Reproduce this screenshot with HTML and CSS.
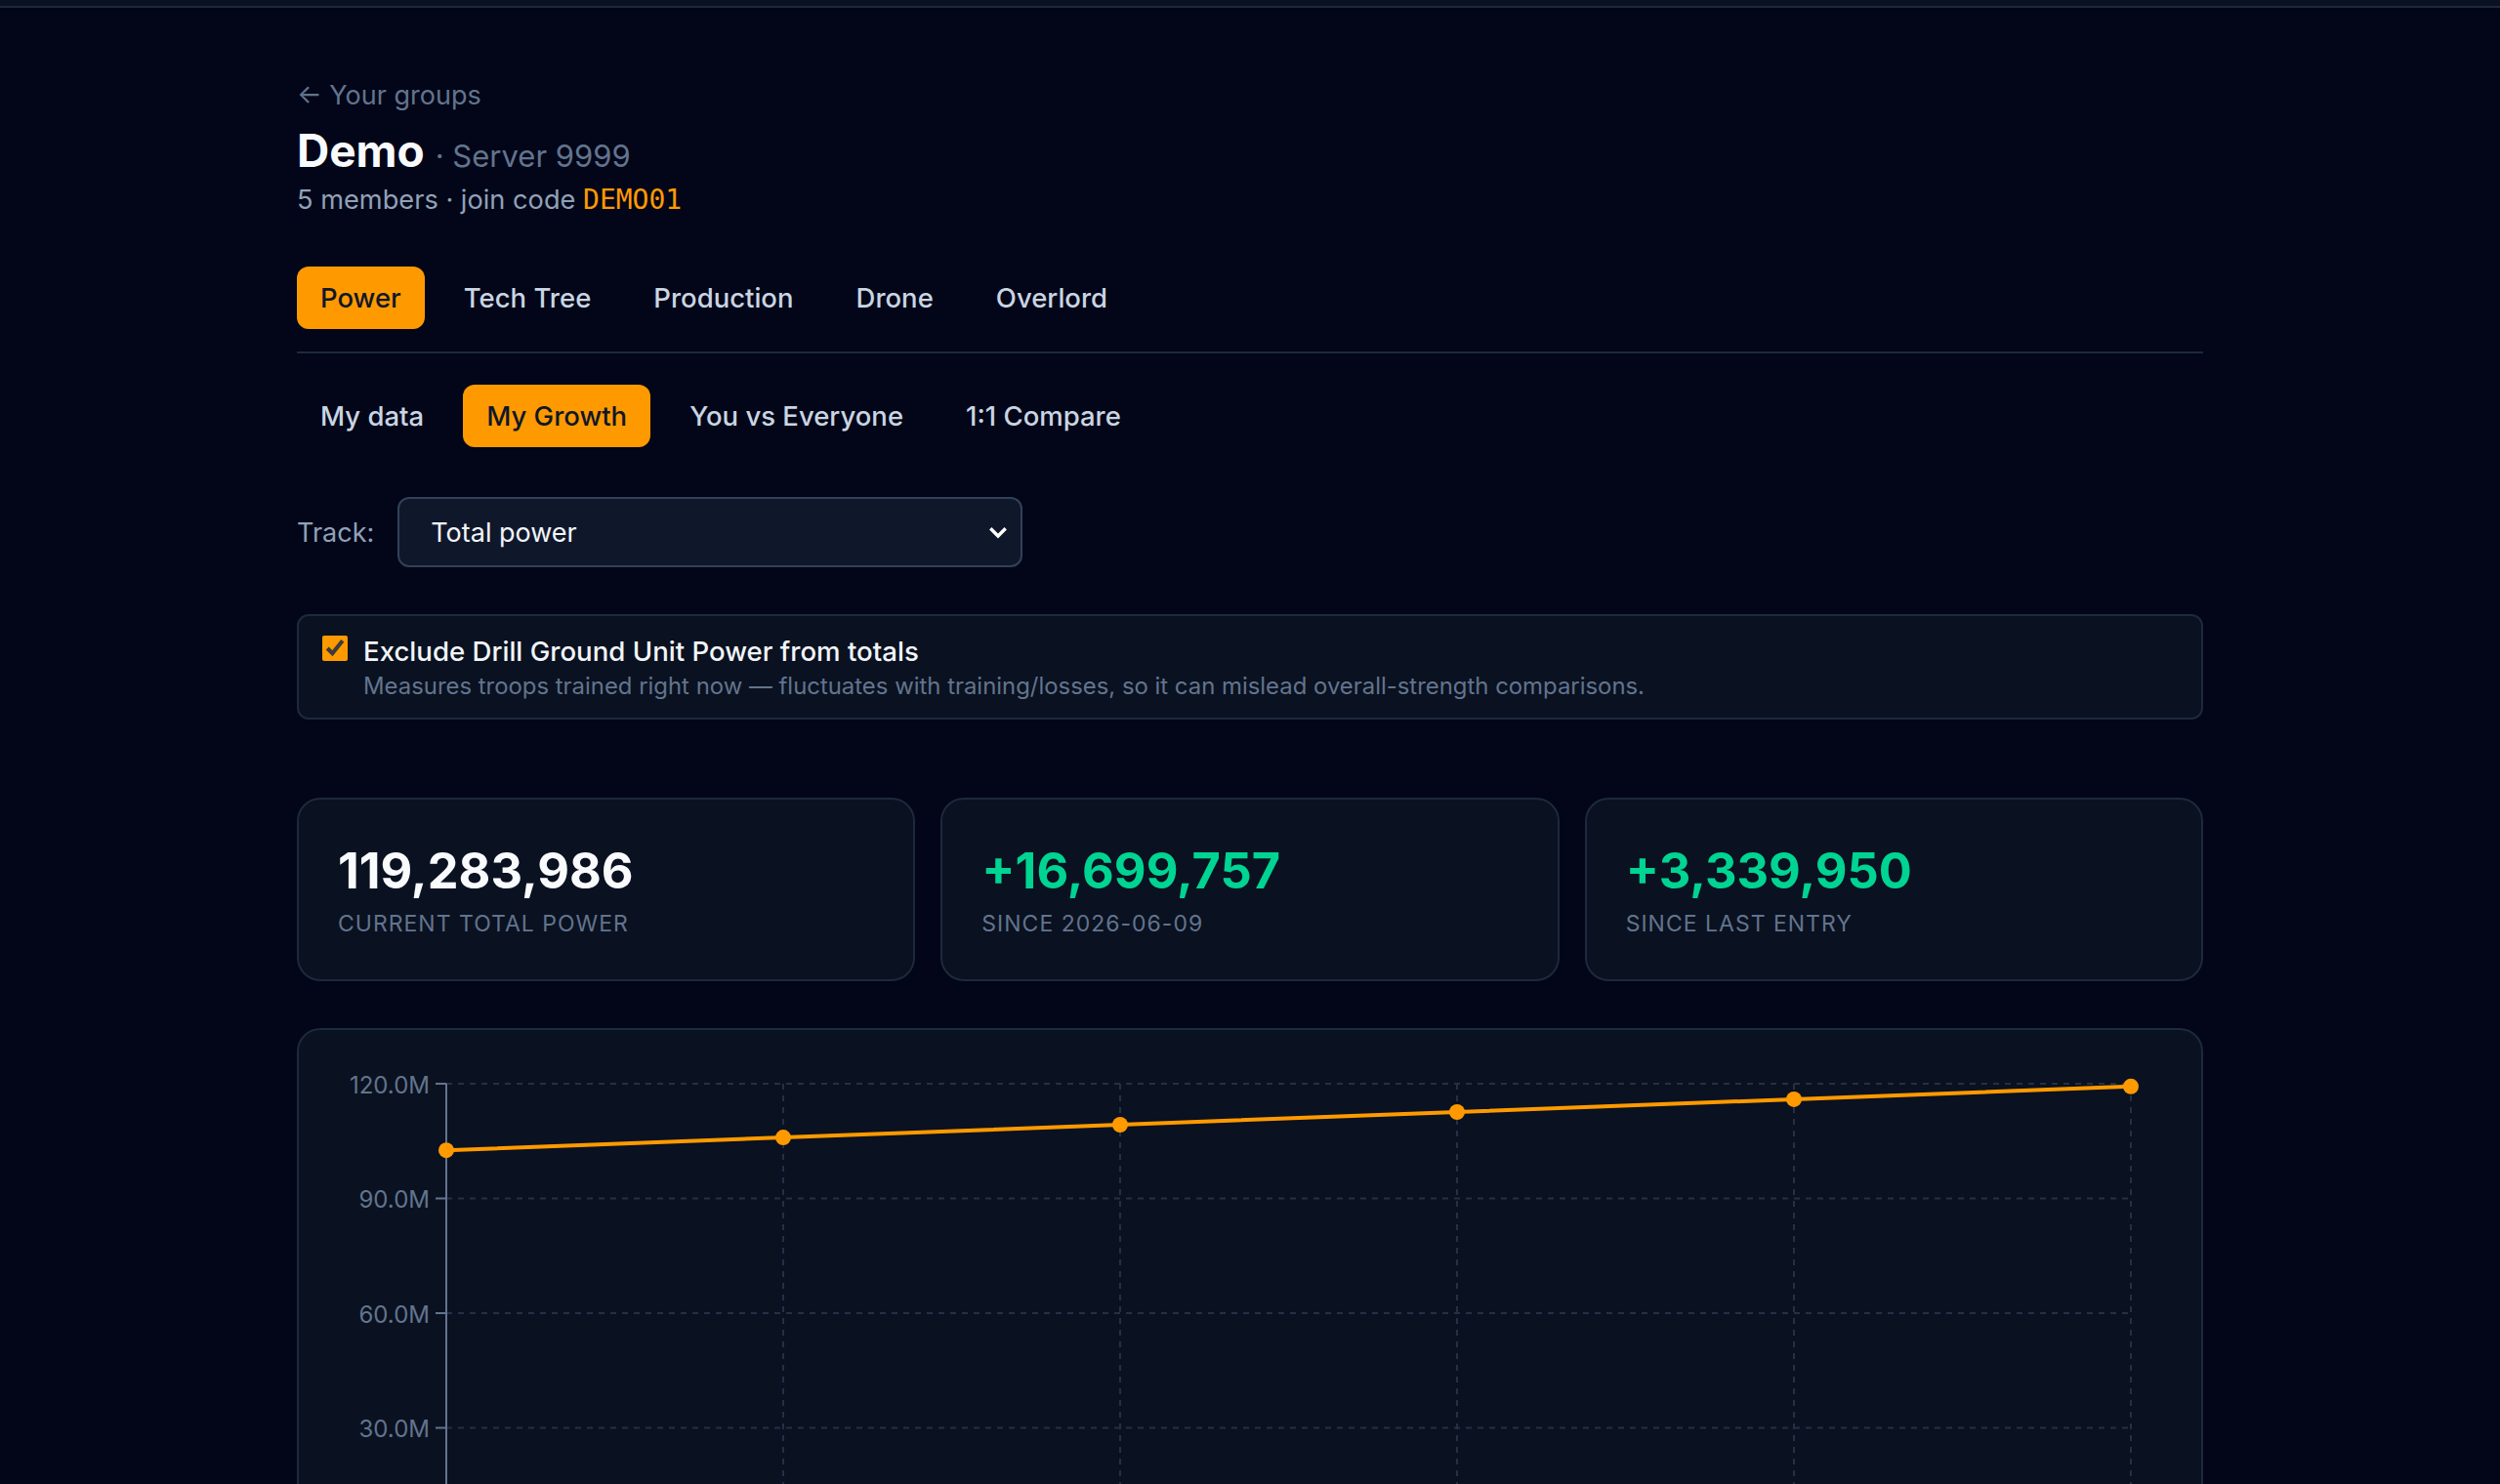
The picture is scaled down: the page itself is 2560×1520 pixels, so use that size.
FILE: index.html
```html
<!DOCTYPE html>
<html>
<head>
  <title>Demo · Server 9999</title>
  <meta charset="UTF-8">
  <meta name="viewport" content="width=device-width, initial-scale=1.0">
  <link rel="stylesheet" href="styles.css">
</head>
<body>
  <header class="topbar"></header>
  <main class="page">
    <a class="back-link" href="#">← Your groups</a>
    <h1 class="group-title">Demo <span class="server">· Server 9999</span></h1>
    <p class="group-meta">5 members · join code <code class="join-code">DEMO01</code></p>

    <nav class="tabs main-tabs">
      <button class="tab active">Power</button>
      <button class="tab">Tech Tree</button>
      <button class="tab">Production</button>
      <button class="tab">Drone</button>
      <button class="tab">Overlord</button>
    </nav>

    <nav class="tabs sub-tabs">
      <button class="tab">My data</button>
      <button class="tab active">My Growth</button>
      <button class="tab">You vs Everyone</button>
      <button class="tab">1:1 Compare</button>
    </nav>

    <div class="track-row">
      <label for="track">Track:</label>
      <div class="select-wrap">
        <select id="track" class="track-select">
          <option>Total power</option>
          <option>Hero power</option>
          <option>Building power</option>
        </select>
        <svg class="chevron" width="18" height="12" viewBox="0 0 18 12">
          <path d="M2.5 2.5 L9 9 L15.5 2.5" fill="none" stroke="#fff" stroke-width="3.4" stroke-linecap="square"/>
        </svg>
      </div>
    </div>

    <label class="exclude-card">
      <input type="checkbox" class="exclude-check" checked>
      <span class="exclude-text">
        <span class="exclude-title">Exclude Drill Ground Unit Power from totals</span>
        <span class="exclude-hint">Measures troops trained right now — fluctuates with training/losses, so it can mislead overall-strength comparisons.</span>
      </span>
    </label>

    <section class="stats">
      <div class="stat-card">
        <div class="stat-value">119,283,986</div>
        <div class="stat-label">Current total power</div>
      </div>
      <div class="stat-card">
        <div class="stat-value up">+16,699,757</div>
        <div class="stat-label">Since 2026-06-09</div>
      </div>
      <div class="stat-card">
        <div class="stat-value up">+3,339,950</div>
        <div class="stat-label">Since last entry</div>
      </div>
    </section>

    <section class="chart-card">
      <svg class="chart" width="1948" height="620" viewBox="0 0 1948 620">
        <g class="grid">
          <line x1="151" y1="55" x2="1876" y2="55"/>
          <line x1="151" y1="172.5" x2="1876" y2="172.5"/>
          <line x1="151" y1="290" x2="1876" y2="290"/>
          <line x1="151" y1="407.5" x2="1876" y2="407.5"/>
          <line x1="496" y1="55" x2="496" y2="525"/>
          <line x1="841" y1="55" x2="841" y2="525"/>
          <line x1="1186" y1="55" x2="1186" y2="525"/>
          <line x1="1531" y1="55" x2="1531" y2="525"/>
          <line x1="1876" y1="55" x2="1876" y2="525"/>
        </g>
        <g class="axis">
          <line x1="151" y1="55" x2="151" y2="525"/>
          <line x1="151" y1="525" x2="1876" y2="525"/>
          <line x1="140" y1="55" x2="151" y2="55"/>
          <line x1="140" y1="172.5" x2="151" y2="172.5"/>
          <line x1="140" y1="290" x2="151" y2="290"/>
          <line x1="140" y1="407.5" x2="151" y2="407.5"/>
        </g>
        <g class="tick-labels">
          <text x="134" y="56">120.0M</text>
          <text x="134" y="173.5">90.0M</text>
          <text x="134" y="291">60.0M</text>
          <text x="134" y="408.5">30.0M</text>
        </g>
        <polyline class="series" points="151,123.2 496,110.1 841,97.0 1186,84.0 1531,70.9 1876,57.8"/>
        <g class="dots">
          <circle cx="151" cy="123.2" r="8"/>
          <circle cx="496" cy="110.1" r="8"/>
          <circle cx="841" cy="97.0" r="8"/>
          <circle cx="1186" cy="84.0" r="8"/>
          <circle cx="1531" cy="70.9" r="8"/>
          <circle cx="1876" cy="57.8" r="8"/>
        </g>
      </svg>
    </section>
  </main>
</body>
</html>
```

FILE: styles.css
```css
body {
  margin: 0;
  background-color: #020618;
  color: #f1f5f9;
  font-family: Inter, "Noto Sans", sans-serif;
}
.topbar {
  height: 6px;
  background-color: #0a1120;
  border-bottom: 2px solid #1d293d;
}
.page {
  width: 1952px;
  margin: 0 auto;
  padding: 70px 0 120px;
}
.back-link {
  display: inline-block;
  font-size: 27px;
  line-height: 40px;
  color: #62748e;
  text-decoration: none;
}
.group-title {
  margin: 8px 0 0;
  font-size: 46px;
  line-height: 56px;
  font-weight: 700;
  color: #f8fafc;
}
.group-title .server {
  font-size: 31px;
  font-weight: 400;
  color: #62748e;
}
.group-meta {
  margin: -1px 0 0;
  font-size: 27.2px;
  line-height: 36px;
  color: #90a1b9;
}
.join-code {
  font-family: "DejaVu Sans Mono", "Liberation Mono", monospace;
  font-size: 28px;
  color: #fe9a00;
}

/* tabs */
.tabs {
  display: flex;
  gap: 16px;
}
.main-tabs {
  margin-top: 50px;
  padding-bottom: 23px;
  border-bottom: 2px solid #1d293d;
}
.sub-tabs {
  margin-top: 32px;
}
.tab {
  padding: 12px 24px;
  font-family: inherit;
  font-size: 27.5px;
  line-height: 40px;
  font-weight: 500;
  color: #cad5e2;
  background: none;
  border: none;
  border-radius: 12px;
  cursor: pointer;
}
.tab.active {
  background-color: #fe9a00;
  color: #0f172b;
}

/* track select */
.track-row {
  display: flex;
  align-items: center;
  gap: 24px;
  margin-top: 51px;
}
.track-row label {
  font-size: 27px;
  color: #90a1b9;
}
.select-wrap {
  position: relative;
}
.track-select {
  appearance: none;
  width: 640px;
  height: 72px;
  padding: 0 60px 0 32px;
  font-family: inherit;
  font-size: 27px;
  color: #f1f5f9;
  background-color: #0f172b;
  border: 2px solid #314158;
  border-radius: 12px;
}
.chevron {
  position: absolute;
  right: 16px;
  top: 31px;
  pointer-events: none;
}

/* exclude option */
.exclude-card {
  display: flex;
  align-items: flex-start;
  gap: 16px;
  margin-top: 48px;
  padding: 16px 24px;
  background-color: #0a1120;
  border: 2px solid #1d293d;
  border-radius: 12px;
  cursor: pointer;
}
.exclude-check {
  width: 26px;
  height: 26px;
  margin: 4px 0 0;
  accent-color: #fe9a00;
}
.exclude-text {
  display: flex;
  flex-direction: column;
}
.exclude-title {
  font-size: 27.6px;
  line-height: 40px;
  font-weight: 500;
  color: #f1f5f9;
}
.exclude-hint {
  font-size: 23.9px;
  line-height: 32px;
  color: #62748e;
}

/* stats */
.stats {
  display: grid;
  grid-template-columns: repeat(3, 1fr);
  gap: 26px;
  margin-top: 80px;
}
.stat-card {
  padding: 41px 40px;
  background-color: #0a1120;
  border: 2px solid #1d293d;
  border-radius: 24px;
}
.stat-value {
  font-size: 50.5px;
  line-height: 64px;
  font-weight: 700;
  color: #f8fafc;
}
.stat-value.up {
  color: #00d492;
}
.stat-label {
  margin-top: 6px;
  font-size: 23px;
  line-height: 32px;
  letter-spacing: 1px;
  text-transform: uppercase;
  color: #62748e;
}

/* chart */
.chart-card {
  margin-top: 48px;
  background-color: #0a1120;
  border: 2px solid #1d293d;
  border-radius: 24px;
}
.chart {
  display: block;
}
.grid line {
  stroke: #253045;
  stroke-width: 2;
  stroke-dasharray: 6 6;
}
.axis line {
  stroke: #62748e;
  stroke-width: 2;
}
.tick-labels text {
  font-family: Inter, "Noto Sans", sans-serif;
  font-size: 24px;
  fill: #62748e;
  text-anchor: end;
  dominant-baseline: central;
}
.series {
  fill: none;
  stroke: #fe9a00;
  stroke-width: 4;
}
.dots circle {
  fill: #fe9a00;
}
```
